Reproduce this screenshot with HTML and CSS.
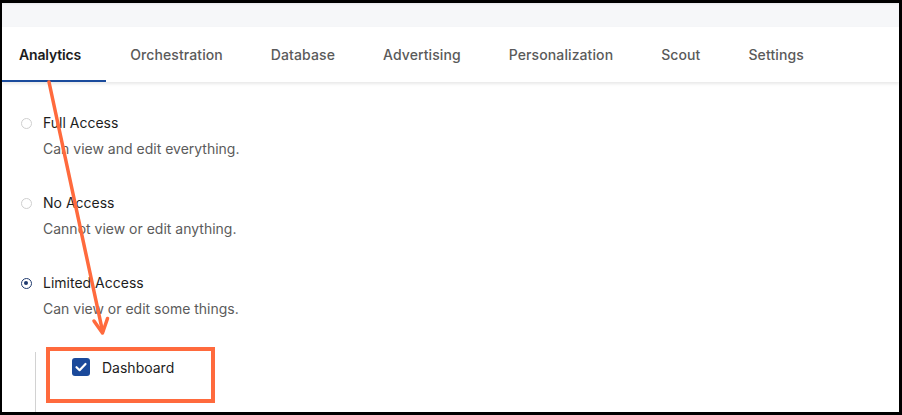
FILE: index.html
```html
<!DOCTYPE html>
<html>
<head>
<meta charset="utf-8">
<link rel="stylesheet" href="styles.css">
</head>
<body>
<div class="frame">
  <div class="topbar"></div>
  <nav class="tabs">
    <div class="tab active">Analytics</div>
    <div class="tab">Orchestration</div>
    <div class="tab">Database</div>
    <div class="tab">Advertising</div>
    <div class="tab">Personalization</div>
    <div class="tab">Scout</div>
    <div class="tab">Settings</div>
  </nav>
  <div class="content">
    <div class="option">
      <div class="opt-row"><span class="radio"></span><span class="opt-label">Full Access</span></div>
      <div class="opt-desc">Can view and edit everything.</div>
    </div>
    <div class="option">
      <div class="opt-row"><span class="radio"></span><span class="opt-label">No Access</span></div>
      <div class="opt-desc">Cannot view or edit anything.</div>
    </div>
    <div class="option">
      <div class="opt-row"><span class="radio checked"></span><span class="opt-label">Limited Access</span></div>
      <div class="opt-desc">Can view or edit some things.</div>
    </div>
    <div class="sublist">
      <div class="check-row">
        <span class="checkbox">
          <svg width="18" height="18" viewBox="0 0 18 18"><path d="M4.5 9.2 L7.6 12.2 L13.5 6" fill="none" stroke="#fff" stroke-width="2.2" stroke-linecap="round" stroke-linejoin="round"/></svg>
        </span>
        <span class="check-label">Dashboard</span>
      </div>
    </div>
  </div>
  <svg class="annot" width="902" height="415" viewBox="0 0 902 415">
    <rect x="48" y="349" width="165" height="52" fill="none" stroke="#ff6a3d" stroke-width="4"/>
    <line x1="49" y1="82" x2="102.5" y2="331" stroke="#ff6a3d" stroke-width="3.5" stroke-linecap="round"/>
    <polyline points="94,321 102.5,333 107.5,318.5" fill="none" stroke="#ff6a3d" stroke-width="3.5" stroke-linecap="round" stroke-linejoin="round"/>
  </svg>
</div>
</body>
</html>
```
FILE: styles.css
```css
html, body {
  margin: 0;
  padding: 0;
  background: #000;
}
.frame {
  position: relative;
  box-sizing: border-box;
  width: 902px;
  height: 415px;
  border-style: solid;
  border-color: #000;
  border-width: 3px 3px 3px 2px;
  background: #fff;
  overflow: hidden;
  font-family: Inter, "Noto Sans", sans-serif;
}
.topbar {
  height: 24px;
  background: #f6f7f9;
  box-shadow: inset 0 2px 2px -1px #e6e7ea;
}
.tabs {
  display: flex;
  height: 55px;
  background: #fff;
  box-shadow: 0 2px 3px rgba(0, 0, 0, 0.09);
  position: relative;
  z-index: 1;
}
.tab {
  box-sizing: border-box;
  height: 55px;
  padding: 2px 24px 0;
  display: flex;
  align-items: center;
  font-family: Inter, "Noto Sans", sans-serif;
  font-size: 14px;
  font-weight: 500;
  letter-spacing: 0.1px;
  color: #5a5a5a;
  border-bottom: 2.5px solid transparent;
}
.tab.active {
  color: #1c1c1c;
  font-weight: 600;
  letter-spacing: -0.15px;
  border-bottom-color: #1a4b9c;
  padding-left: 17px;
  padding-right: 25px;
}
.content {
  padding: 31px 0 0 19px;
}
.option {
  margin-bottom: 34px;
}
.opt-row {
  display: flex;
  align-items: center;
  height: 20px;
}
.radio {
  box-sizing: border-box;
  width: 11px;
  height: 11px;
  border-radius: 50%;
  border: 1px solid #cfcfcf;
  margin-right: 11px;
  position: relative;
}
.radio.checked {
  border: 1.5px solid #1f3a6e;
}
.radio.checked::after {
  content: "";
  position: absolute;
  left: 2px;
  top: 2px;
  width: 4px;
  height: 4px;
  border-radius: 50%;
  background: #1f3a6e;
}
.opt-label {
  font-size: 14px;
  color: #1d1d1d;
  line-height: 20px;
}
.opt-desc {
  margin-top: 6px;
  padding-left: 22px;
  font-size: 14px;
  color: #5b5b5b;
  line-height: 20px;
}
.sublist {
  margin-left: 14px;
  margin-top: -1px;
  border-left: 1px solid #d2d2d2;
  height: 80px;
  padding-left: 36px;
  padding-top: 5px;
}
.check-row {
  display: flex;
  align-items: center;
  height: 20px;
}
.checkbox {
  width: 18px;
  height: 18px;
  border-radius: 3px;
  background: #1b4a9b;
  margin-right: 12px;
  display: flex;
}
.check-label {
  font-size: 14px;
  color: #1d1d1d;
}
.annot {
  position: absolute;
  left: -2px;
  top: -3px;
  z-index: 5;
  pointer-events: none;
}
```
